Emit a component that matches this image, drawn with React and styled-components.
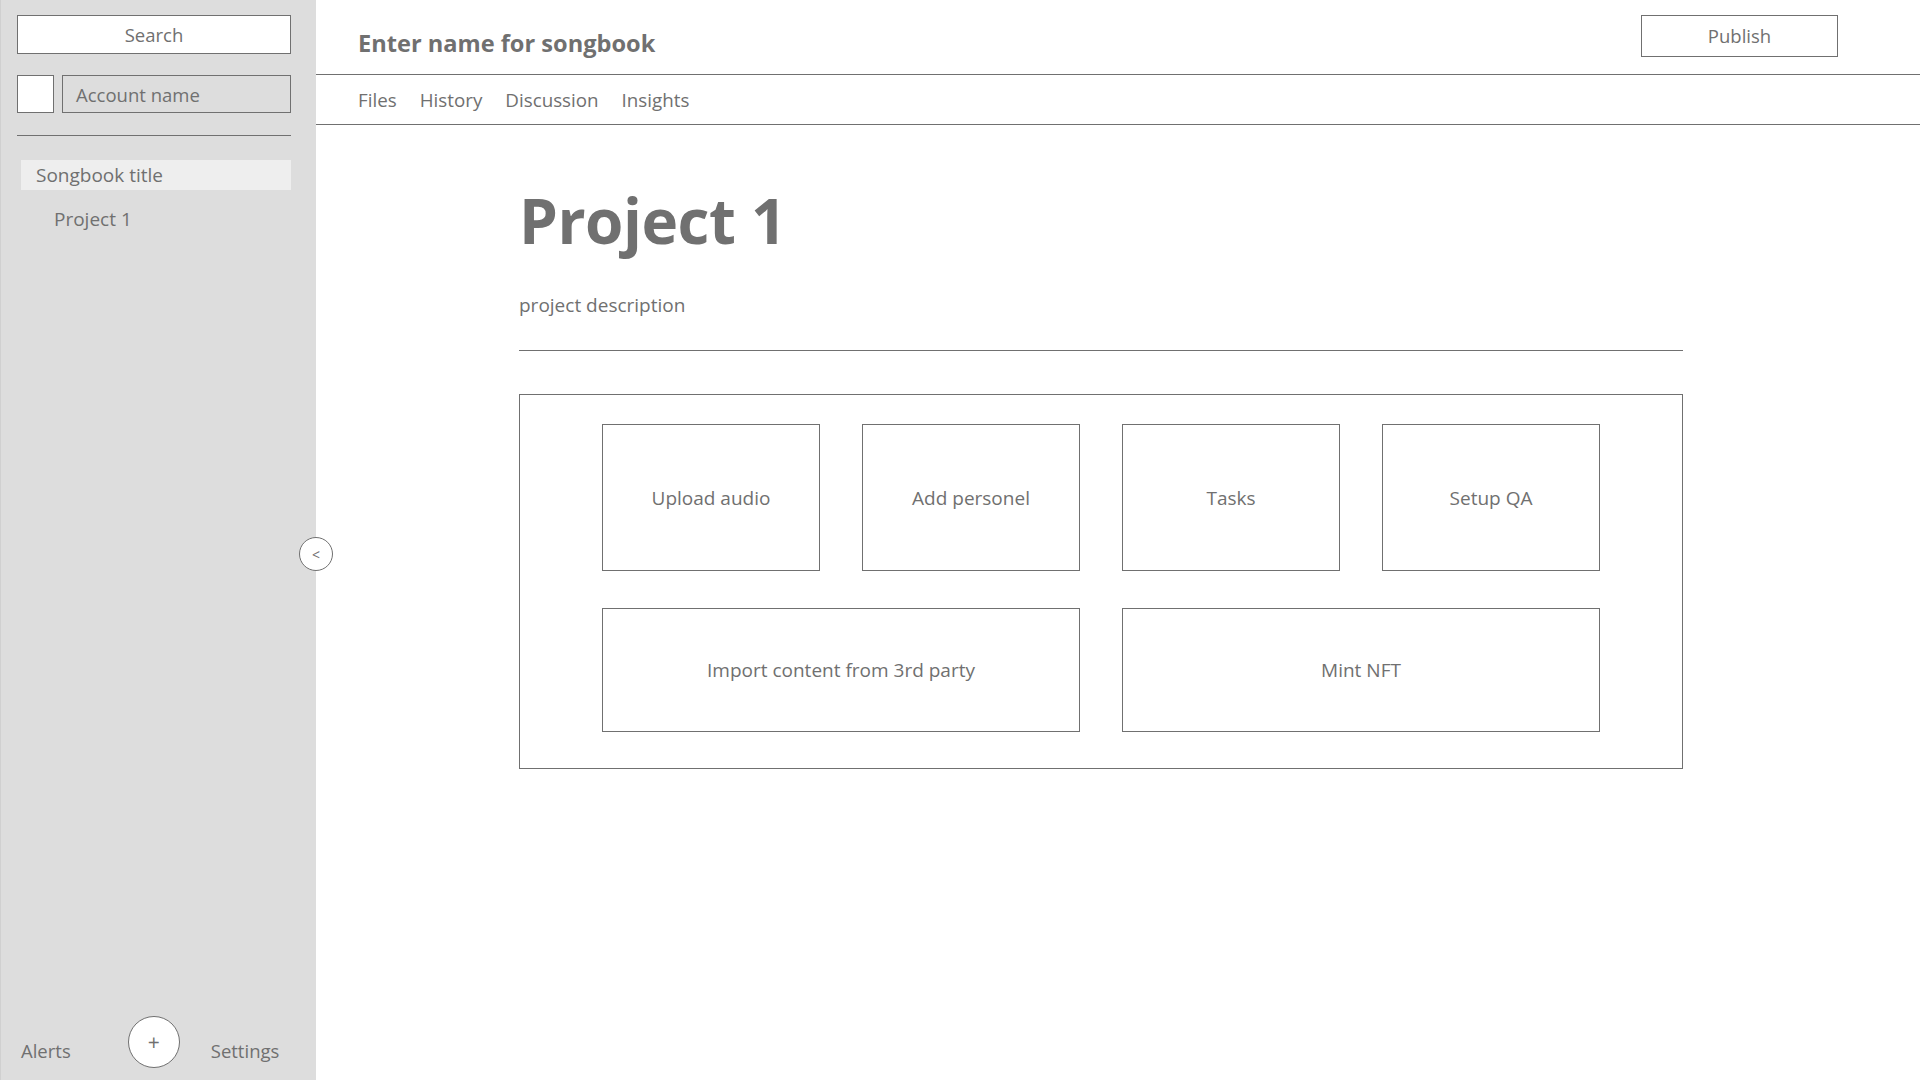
import React from "react";
import styled, { createGlobalStyle } from "styled-components";

const gray = "#707070";
const font = `"Open Sans", "Noto Sans", sans-serif`;

const GlobalStyle = createGlobalStyle`
  html, body {
    margin: 0;
    padding: 0;
    background: #ffffff;
    font-family: ${font};
    color: ${gray};
  }
  * {
    box-sizing: border-box;
  }
`;

const tabs = ["Files", "History", "Discussion", "Insights"];
const actions = [
  { label: "Upload audio" },
  { label: "Add personel" },
  { label: "Tasks" },
  { label: "Setup QA" },
  { label: "Import content from 3rd party", wide: true },
  { label: "Mint NFT", wide: true },
];

const App = () => {
  return (
    <>
      <GlobalStyle />
      <Page>
        <Sidebar>
          <SearchBox>Search</SearchBox>
          <AccountRow>
            <Avatar />
            <AccountName>Account name</AccountName>
          </AccountRow>
          <Divider />
          <NavItem active>Songbook title</NavItem>
          <NavItem sub>Project 1</NavItem>
          <SidebarFooter>
            <FooterLink>Alerts</FooterLink>
            <AddButton>+</AddButton>
            <FooterLink>Settings</FooterLink>
          </SidebarFooter>
          <CollapseButton>&lt;</CollapseButton>
        </Sidebar>

        <Main>
          <Header>
            <SongbookName>Enter name for songbook</SongbookName>
            <PublishButton>Publish</PublishButton>
          </Header>
          <TabBar>
            {tabs.map((t) => (
              <Tab key={t}>{t}</Tab>
            ))}
          </TabBar>
          <Content>
            <ProjectTitle>Project 1</ProjectTitle>
            <Description>project description</Description>
            <Rule />
            <ActionPanel>
              <ActionGrid>
                {actions.map((a) => (
                  <ActionCard key={a.label} wide={a.wide}>
                    {a.label}
                  </ActionCard>
                ))}
              </ActionGrid>
            </ActionPanel>
          </Content>
        </Main>
      </Page>
    </>
  );
};

// Styles
const Page = styled.div`
  display: flex;
  width: 100%;
  height: 100vh;
  overflow: hidden;
`;

const Sidebar = styled.aside`
  position: relative;
  width: 316px;
  flex-shrink: 0;
  height: 100%;
  background: #dddddd;
  border-left: 1px solid #d0d0d0;
  padding: 15px 25px 0 16px;
  display: flex;
  flex-direction: column;
`;

const SearchBox = styled.div`
  height: 39px;
  background: #ffffff;
  border: 1px solid ${gray};
  display: flex;
  align-items: center;
  justify-content: center;
  font-size: 18.5px;
`;

const AccountRow = styled.div`
  display: flex;
  gap: 8px;
  margin-top: 21px;
`;

const Avatar = styled.div`
  width: 37px;
  height: 38px;
  background: #ffffff;
  border: 1px solid ${gray};
`;

const AccountName = styled.div`
  flex: 1;
  height: 38px;
  border: 1px solid ${gray};
  display: flex;
  align-items: center;
  padding-left: 13px;
  font-size: 18.5px;
`;

const Divider = styled.div`
  height: 1px;
  background: ${gray};
  margin-top: 22px;
`;

const NavItem = styled.div`
  height: 30px;
  display: flex;
  align-items: center;
  margin-top: ${(p) => (p.sub ? "14px" : "24px")};
  margin-left: 4px;
  padding-left: ${(p) => (p.sub ? "33px" : "15px")};
  background: ${(p) => (p.active ? "#eeeeee" : "transparent")};
  font-size: 19px;
`;

const SidebarFooter = styled.div`
  margin-top: auto;
  margin-bottom: 12px;
  display: flex;
  align-items: center;
  padding-left: 4px;
`;

const FooterLink = styled.span`
  font-size: 18.5px;
  padding-top: 16px;
`;

const AddButton = styled.div`
  width: 52px;
  height: 52px;
  border-radius: 50%;
  background: #ffffff;
  border: 1px solid ${gray};
  display: flex;
  align-items: center;
  justify-content: center;
  font-size: 21px;
  margin: 0 31px 0 57px;
`;

const CollapseButton = styled.div`
  position: absolute;
  top: 537px;
  right: -17px;
  width: 34px;
  height: 34px;
  border-radius: 50%;
  background: #ffffff;
  border: 1px solid ${gray};
  display: flex;
  align-items: center;
  justify-content: center;
  font-size: 14px;
  z-index: 2;
`;

const Main = styled.main`
  flex: 1;
  display: flex;
  flex-direction: column;
  min-width: 0;
`;

const Header = styled.header`
  height: 75px;
  border-bottom: 1px solid ${gray};
  display: flex;
  align-items: flex-start;
  justify-content: space-between;
  padding: 15px 82px 0 42px;
`;

const SongbookName = styled.h1`
  margin: 13px 0 0;
  font-size: 23.6px;
  font-weight: 700;
  line-height: 30px;
`;

const PublishButton = styled.div`
  width: 197px;
  height: 42px;
  border: 1px solid ${gray};
  display: flex;
  align-items: center;
  justify-content: center;
  padding-bottom: 2px;
  font-size: 18.5px;
`;

const TabBar = styled.nav`
  height: 50px;
  border-bottom: 1px solid ${gray};
  display: flex;
  align-items: center;
  gap: 23px;
  padding-left: 42px;
`;

const Tab = styled.span`
  font-size: 18.8px;
`;

const Content = styled.section`
  padding: 50px 0 0 203px;
  width: 1367px;
`;

const ProjectTitle = styled.h2`
  margin: 0;
  font-size: 62px;
  font-weight: 700;
  letter-spacing: -0.5px;
  line-height: 90px;
`;

const Description = styled.p`
  margin: 27px 0 0;
  font-size: 19px;
  line-height: 26px;
`;

const Rule = styled.div`
  height: 1px;
  background: ${gray};
  margin-top: 32px;
`;

const ActionPanel = styled.div`
  margin-top: 43px;
  border: 1px solid ${gray};
  padding: 29px 0 36px;
  display: flex;
  justify-content: center;
`;

const ActionGrid = styled.div`
  display: grid;
  grid-template-columns: repeat(4, 218px);
  grid-auto-rows: auto;
  column-gap: 42px;
  row-gap: 37px;
`;

const ActionCard = styled.div`
  grid-column: span ${(p) => (p.wide ? 2 : 1)};
  height: ${(p) => (p.wide ? "124px" : "147px")};
  border: 1px solid ${gray};
  display: flex;
  align-items: center;
  justify-content: center;
  font-size: 19px;
`;

export default App;
